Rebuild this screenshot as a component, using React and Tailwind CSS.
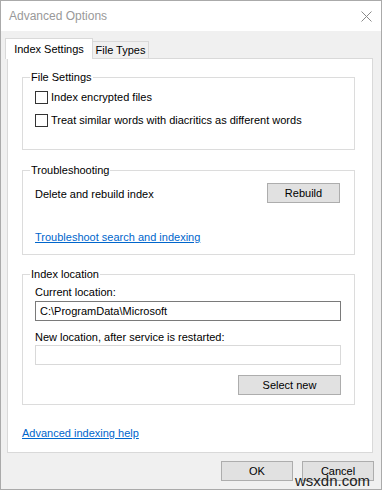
import { useState } from 'react'

const font = { fontFamily: '"Liberation Sans", Arial, sans-serif' }

const Checkbox = ({ label }) => {
  const [checked, setChecked] = useState(false)
  return (
    <label className="flex items-center h-4 cursor-default" onClick={() => setChecked(!checked)}>
      <span className="w-[13px] h-[13px] border border-[#333] bg-white flex items-center justify-center">
        {checked && (
          <svg width="9" height="9" viewBox="0 0 9 9">
            <path d="M1 4.5 L3.5 7 L8 1.5" fill="none" stroke="#333" strokeWidth="1.3" />
          </svg>
        )}
      </span>
      <span className="ml-[3px]">{label}</span>
    </label>
  )
}

const Button = ({ children, className = '' }) => (
  <button className={`h-5 bg-[#e1e1e1] border border-[#adadad] text-[#000] leading-none ${className}`}>
    {children}
  </button>
)

const Group = ({ title, children, className = '' }) => (
  <fieldset className={`border border-[#dcdcdc] ${className}`}>
    <legend className="-ml-[5px] px-[1px] leading-4">{title}</legend>
    {children}
  </fieldset>
)

export default function App() {
  const [tab, setTab] = useState('index')

  return (
    <div className="w-[382px] h-[491px] bg-white text-[11px] text-[#000] select-none" style={font}>
      <div className="h-[490px] border border-[#aaaaaa] bg-[#f0f0f0] flex flex-col">
        {/* Title bar */}
        <div className="h-[30px] bg-white flex items-center justify-between pl-2 pr-[9px]">
          <span className="text-[#999] text-[12px]">Advanced Options</span>
          <svg width="11" height="11" viewBox="0 0 11 11">
            <path d="M0.5 0.5 L10.5 10.5 M10.5 0.5 L0.5 10.5" stroke="#8a8a8a" strokeWidth="1" />
          </svg>
        </div>

        {/* Tabs */}
        <div className="flex items-end pt-[7px] pl-1 h-[27px]">
          <button
            onClick={() => setTab('index')}
            className="h-[21px] w-[88px] bg-white border border-b-0 border-[#d9d9d9] relative top-[1px] z-10"
          >
            Index Settings
          </button>
          <button
            onClick={() => setTab('types')}
            className="h-[17px] w-[56px] bg-[#f0f0f0] border border-b-0 border-l-0 border-[#d9d9d9] leading-none"
          >
            File Types
          </button>
        </div>

        {/* Tab panel */}
        <div className="mx-[6px] mr-[8px] h-[395px] bg-white border border-[#d9d9d9] pl-[14px] pr-[17px] pt-[10px] flex flex-col">
          <Group title="File Settings" className="h-[81px] pl-3">
            <div className="mt-1 flex flex-col gap-[7px]">
              <Checkbox label="Index encrypted files" />
              <Checkbox label="Treat similar words with diacritics as different words" />
            </div>
          </Group>

          <Group title="Troubleshooting" className="mt-3 h-[93px] pl-3 pr-[14px]">
            <div className="mt-[5px] flex items-center justify-between">
              <span className="pt-[2px]">Delete and rebuild index</span>
              <Button className="w-[73px]">Rebuild</Button>
            </div>
            <a href="#" className="block mt-[26px] text-[#0066cc] underline leading-4 w-fit">
              Troubleshoot search and indexing
            </a>
          </Group>

          <Group title="Index location" className="mt-[11px] h-[139px] pl-3 pr-[13px]">
            <div className="mt-[2px] leading-4">Current location:</div>
            <div className="mt-[1px] h-5 border border-[#7a7a7a] flex items-center px-1">
              C:\ProgramData\Microsoft
            </div>
            <div className="mt-2 leading-4">New location, after service is restarted:</div>
            <div className="h-5 border border-[#d9d9d9]" />
            <div className="mt-[10px] flex justify-end">
              <Button className="w-[103px]">Select new</Button>
            </div>
          </Group>

          <a href="#" className="mt-[20px] text-[#0066cc] underline leading-4 self-start">
            Advanced indexing help
          </a>
        </div>

        {/* Footer buttons */}
        <div className="flex justify-end gap-[9px] pt-2 pr-[7px] relative">
          <Button className="w-[72px]">OK</Button>
          <Button className="w-[72px]">Cancel</Button>
          <span className="absolute right-[11px] top-[20px] text-[15px] leading-none text-[#222]">wsxdn.com</span>
        </div>
      </div>
    </div>
  )
}
